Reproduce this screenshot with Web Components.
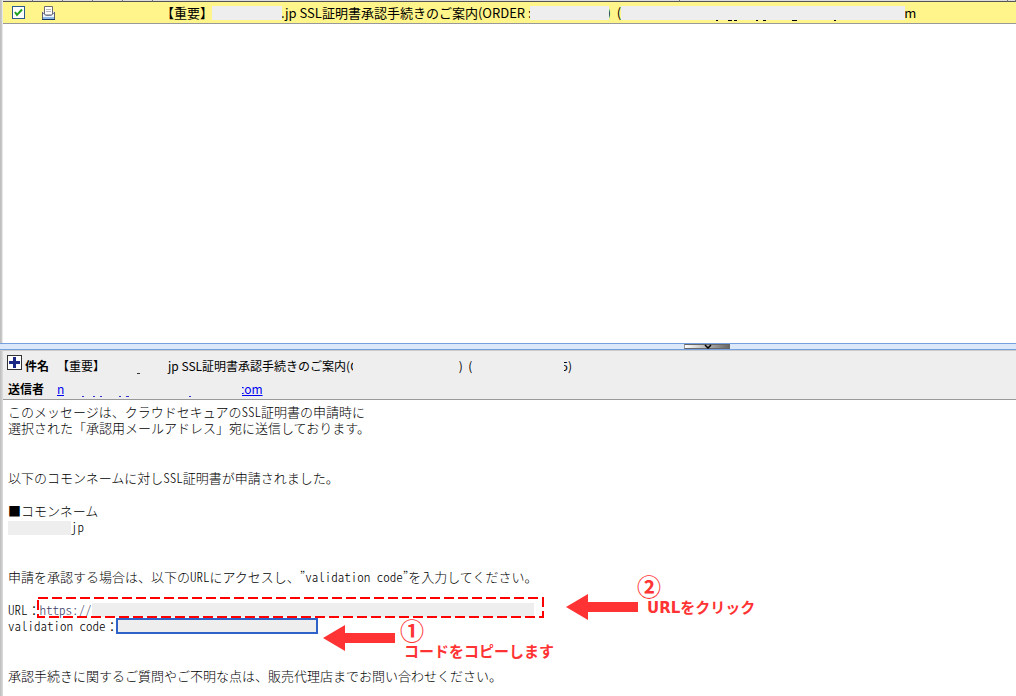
<!DOCTYPE html>
<html lang="ja">
<head>
<meta charset="utf-8">
<title>SSL証明書承認手続きのご案内</title>
<style>
  html, body { margin: 0; }
  body { font: 13px/16px "Noto Sans CJK JP", sans-serif; color: #000; background: #fff; }
</style>
</head>
<body>
<mail-app>
  <mail-list slot="list"></mail-list>
  <mail-header slot="message"></mail-header>
  <mail-body slot="message"></mail-body>
</mail-app>

<script>
const define = (name, html, setup) => {
  const template = document.createElement('template');
  template.innerHTML = html;
  customElements.define(name, class extends HTMLElement {
    constructor() {
      super();
      this.attachShadow({ mode: 'open' }).append(template.content.cloneNode(true));
    }
    connectedCallback() { if (setup) setup(this); }
  });
};

/* A blanked-out stretch of text; "width" is its length in pixels. */
define('blank-out', `
  <style>
    :host { display: inline-block; position: relative; flex: none; height: 14px; background: #eee; vertical-align: middle; }
    svg { position: absolute; left: 0; top: 100%; width: 100%; height: 3px; overflow: visible; fill: currentColor; }
  </style>
  <svg aria-hidden="true"></svg>
`, el => {
  el.style.width = el.getAttribute('width') + 'px';
  const marks = (el.getAttribute('marks') || '').split(' ').filter(Boolean);
  el.shadowRoot.querySelector('svg').innerHTML = marks.map(m => {
    const [x, w] = m.split(':');
    return `<rect x="${x}" y="0" width="${w}" height="1"/>`;
  }).join('');
});

/* Numbered step with an arrow that points left. */
define('step-callout', `
  <style>
    :host { position: absolute; display: flex; color: #ff3333; white-space: nowrap; font: bold 15px/20px "DejaVu Sans", "Noto Sans CJK JP", sans-serif; }
    svg { display: block; width: 72px; height: 26px; margin-top: var(--arrow-drop, 0); fill: currentColor; flex: none; }
    .label { display: flex; flex-direction: column; margin-left: 9px; }
  </style>
  <svg viewBox="0 0 72 26" aria-hidden="true"><path d="M0 13 22 0V8H72V18H22V26Z"/></svg>
  <div class="label"><slot name="num"></slot><slot></slot></div>
`);

define('mail-list', `
  <style>
    :host { display: block; }
    table { width: 100%; border-collapse: separate; border-spacing: 0; table-layout: fixed; }
    th { height: 1px; padding: 0; background: #ddd; border-right: 1px solid #777; border-bottom: 1px solid #555; }
    td { height: 21px; padding: 0; background: #fff58a; border-bottom: 1px solid #999; line-height: 20px; white-space: nowrap; }
    .tick { width: 30px; }
    td.subject { padding-left: 8px; }
    .row { display: flex; align-items: center; }
    label { display: block; padding-left: 9px; }
    input { appearance: none; display: block; width: 13px; height: 13px; margin: 0; border: 1px solid #2b5a8c;
      background: #fff url('data:image/svg+xml,<svg xmlns="http://www.w3.org/2000/svg" viewBox="0 0 11 11"><path d="M2 5 4 8 9 2.500" fill="none" stroke="%2321a121" stroke-width="2"/></svg>'); }
    svg { display: block; width: 13px; height: 14px; margin-left: 9px; }
    .lead { margin: 0 -2px 0 -2px; }
    .name { margin-right: -1px; }
    .site { margin-left: -1px; }
  </style>
  <table>
    <colgroup><col class="tick"><col class="tick"><col class="tick"><col class="tick"><col class="tick"><col><col style="width:328px"><col style="width:8px"></colgroup>
    <thead><tr><th></th><th></th><th></th><th></th><th></th><th></th><th></th><th></th></tr></thead>
    <tbody><tr>
      <td><label><input type="checkbox" checked aria-label="選択"></label></td>
      <td><svg viewBox="0 0 13 14" aria-label="開封済み" role="img">
        <path d="M0 6 2 5H11L13 6V14H0Z" fill="#dfe9f5"/>
        <path d="M2.500 .500H10.500V9H2.500Z" fill="#fff" stroke="#6a6a70"/>
        <path d="M4 3.500H9M4 5.500H9" stroke="#b5b5b5"/>
        <path d="M1 7 4 9.500H9L12 7V12H1Z" fill="#eef5fc"/>
        <path d="M1 11H12V13H1Z" fill="#8fb9e6"/>
        <path d="M.500 6V14M12.500 6V14" stroke="#5a6070"/>
        <path d="M1 7 4 9.500H9L12 7" fill="none" stroke="#777f90"/>
        <path d="M0 13.500H13" stroke="#12365f"/>
      </svg></td>
      <td></td><td></td><td></td>
      <td class="subject" colspan="3"><div class="row">
        <span class="name">【重要】</span><blank-out width="70"></blank-out><span class="site">.jp SSL証明書承認手続きのご案内(ORDER :</span><blank-out class="lead" width="79"></blank-out><span>)</span><span>&nbsp;&nbsp;(</span><blank-out width="284" marks="95:2 107:4 113:3 135:2 142:3 171:5 213:2"></blank-out><span class="site">m</span>
      </div></td>
    </tr></tbody>
  </table>
`);

define('mail-header', `
  <style>
    :host { display: grid; grid-template-columns: auto 1fr; grid-auto-rows: 20px; gap: 3px 13px; align-items: center;
      padding: 5px 0 0 8px; background: #eee; border-bottom: 1px solid #999; font-size: 12px; line-height: 20px; white-space: nowrap; }
    .label { display: flex; align-items: center; font-weight: bold; }
    .value { display: flex; align-items: center; }
    button { display: block; width: 15px; height: 15px; margin: 0 3px 6px 0; padding: 0; border: 1px solid #333; background: #fff; }
    button svg { display: block; width: 13px; height: 13px; }
    .subject { width: 36px; margin-left: -1px; }
    a { color: #00e; }
    blank-out { color: #333; }
    .sender { color: #33c; }
    .cover { margin-right: -4px; }
    .over { margin-left: -5px; }
    .tail { margin-right: -3px; }
  </style>
  <div class="label subject"><button type="button" aria-label="詳細"><svg viewBox="0 0 13 13"><path d="M6.500 1V12M1 6.500H12" stroke="#1c2a86" stroke-width="3"/></svg></button><span>件名</span></div>
  <div class="value"><span>【重要】</span><blank-out width="63" marks="32:3"></blank-out><span>jp SSL証明書承認手続きのご案内(C</span><blank-out class="over" width="106"></blank-out><span>)&nbsp;&nbsp;(</span><blank-out class="tail" width="92"></blank-out><span>5)</span></div>
  <div class="label">送信者</div>
  <div class="value"><a href="#n">n</a><blank-out class="sender cover" width="178" marks="18:2 29:2 36:2 55:2 62:3 125:2"></blank-out><a href="#com">com</a></div>
`);

define('mail-body', `
  <style>
    :host { display: block; padding: 4px 8px 12px; font-feature-settings: "hwid"; font-weight: 300; }
    p { margin: 0 0 34px; }
    p:last-child { margin: 0; }
    p.near { margin-bottom: 17px; }
    .line { display: flex; position: relative; height: 16px; white-space: nowrap; }
    .wide { font-feature-settings: normal; }
    .url { position: relative; display: flex; align-items: center; height: 16px; width: 507px; margin-left: -4px; }
    .frame { position: absolute; left: 0; top: -5px; width: 507px; height: 21px; }
    .frame rect { fill: none; stroke: #f00; stroke-width: 2; stroke-dasharray: 10 4; }
    a { padding-left: 3px; color: #3c3c66; text-decoration: none; }
    .code { height: 12px; width: 198px; margin-left: -3px; border: 2px solid #2f62c9; background: #eee; }
    .num { font: bold 24px/24px "Noto Sans CJK JP", sans-serif; margin-left: -4px; }
    .first { left: 315px; top: 0; --arrow-drop: 7px; }
    .second { left: 558px; top: -28px; --arrow-drop: 20px; }
    .second .num { margin-left: -10px; }
    step-callout { font-feature-settings: normal; }
  </style>
  <p>このメッセージは、クラウドセキュアのSSL証明書の申請時に<br>選択された「承認用メールアドレス」宛に送信しております。</p>
  <p class="near">以下のコモンネームに対しSSL証明書が申請されました。</p>
  <p>■コモンネーム<br><blank-out width="63"></blank-out>jp</p>
  <p class="near">申請を承認する場合は、以下のURLにアクセスし、”validation code”を入力してください。</p>
  <p><span class="line"><span>URL<span class="wide">：</span></span><span class="url"><a href="#url">https://</a><blank-out width="442"></blank-out><svg class="frame" viewBox="0 0 507 21" aria-hidden="true"><rect x="1" y="1" width="505" height="19"/></svg></span><step-callout class="second"><span slot="num" class="num">②</span>URLをクリック</step-callout></span><span class="line"><span>validation code<span class="wide">：</span></span><span class="code"></span><step-callout class="first"><span slot="num" class="num">①</span>コードをコピーします</step-callout></span></p>
  <p>承認手続きに関するご質問やご不明な点は、販売代理店までお問い合わせください。</p>
`);

define('mail-app', `
  <style>
    :host { display: flex; flex-direction: column; min-height: 100vh; }
    .pane { padding-left: 3px; background: linear-gradient(90deg, #bbb, #ccc 2px, #e8e8e8 2px, #e8e8e8 3px, #fff 3px); }
    .list { flex: 1; }
    .message { position: relative; padding: 0; }
    .message::before { content: ""; position: absolute; inset: 0 auto 0 0; width: 3px; background: linear-gradient(90deg, #bbb, #ddd); }
    .split { position: relative; height: 5px; background: #dbe8fa; border: 1px solid #74a0e0; border-width: 1px 0; box-shadow: 0 1px #ccc; margin-bottom: 1px; }
    .split button { position: absolute; left: 67.3%; top: 0; width: 46px; height: 5px; padding: 0; border: 1px solid #666; border-left-color: #999;
      background: linear-gradient(90deg, #fff, #666); }
    .split svg { position: absolute; left: 19px; top: -1px; width: 8px; height: 5px; }
  </style>
  <section class="pane list"><slot name="list"></slot></section>
  <div class="split"><button type="button" aria-label="折りたたむ"><svg viewBox="0 0 8 5"><path d="M1 1 4 4 7 1" fill="none" stroke="#000" stroke-width="1.500"/></svg></button></div>
  <section class="pane message"><slot name="message"></slot></section>
`);
</script>
</body>
</html>
